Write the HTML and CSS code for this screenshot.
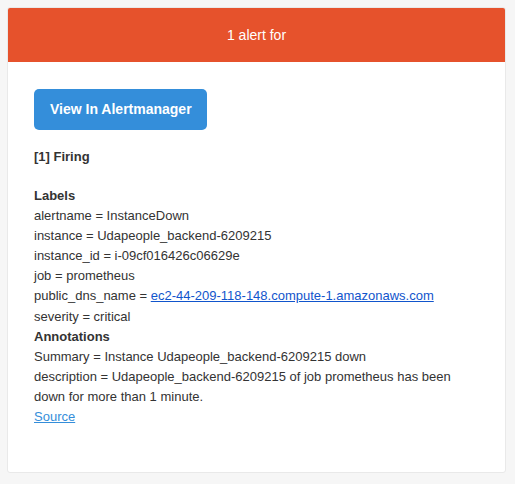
FILE: index.html
```html
<!DOCTYPE html>
<html>
<head>
<meta charset="utf-8">
<link rel="stylesheet" href="styles.css">
</head>
<body>
<div class="card">
  <div class="header">1 alert for</div>
  <div class="content">
    <a class="btn" href="#">View In Alertmanager</a>
    <div class="firing"><strong>[1] Firing</strong></div>
    <div class="details">
      <strong>Labels</strong><br>
      alertname = InstanceDown<br>
      instance = Udapeople_backend-6209215<br>
      instance_id = i-09cf016426c06629e<br>
      job = prometheus<br>
      public_dns_name = <a class="dns" href="#">ec2-44-209-118-148.compute-1.amazonaws.com</a><br>
      severity = critical<br>
      <strong>Annotations</strong><br>
      Summary = Instance Udapeople_backend-6209215 down<br>
      description = Udapeople_backend-6209215 of job prometheus has been down for more than 1 minute.<br>
      <a class="source" href="#">Source</a>
    </div>
  </div>
</div>
</body>
</html>
```
FILE: styles.css
```css
html, body {
  margin: 0;
  padding: 0;
  background: #f6f6f6;
}
body {
  font-family: "Liberation Sans", Arial, Helvetica, sans-serif;
  font-size: 13px;
  color: #333;
  padding: 7px 9px 12px 7px;
}
.card {
  width: 497px;
  background: #fff;
  border: 1px solid #e9e9e9;
  border-radius: 3px;
  overflow: hidden;
}
.header {
  background: #e6522c;
  color: #fff;
  font-size: 14px;
  text-align: center;
  line-height: 20px;
  padding: 17px 0 17px;
}
.content {
  padding: 27px 26px 45px;
}
.btn {
  display: inline-block;
  background: #348eda;
  color: #fff;
  font-size: 14px;
  font-weight: bold;
  text-decoration: none;
  line-height: 21px;
  padding: 10px 15px 10px 16px;
  border-radius: 5px;
}
.firing {
  line-height: 20px;
  margin-top: 17px;
}
.details {
  line-height: 20.1px;
  margin-top: 19px;
}
.dns {
  color: #1155cc;
}
.source {
  color: #348eda;
}
```
